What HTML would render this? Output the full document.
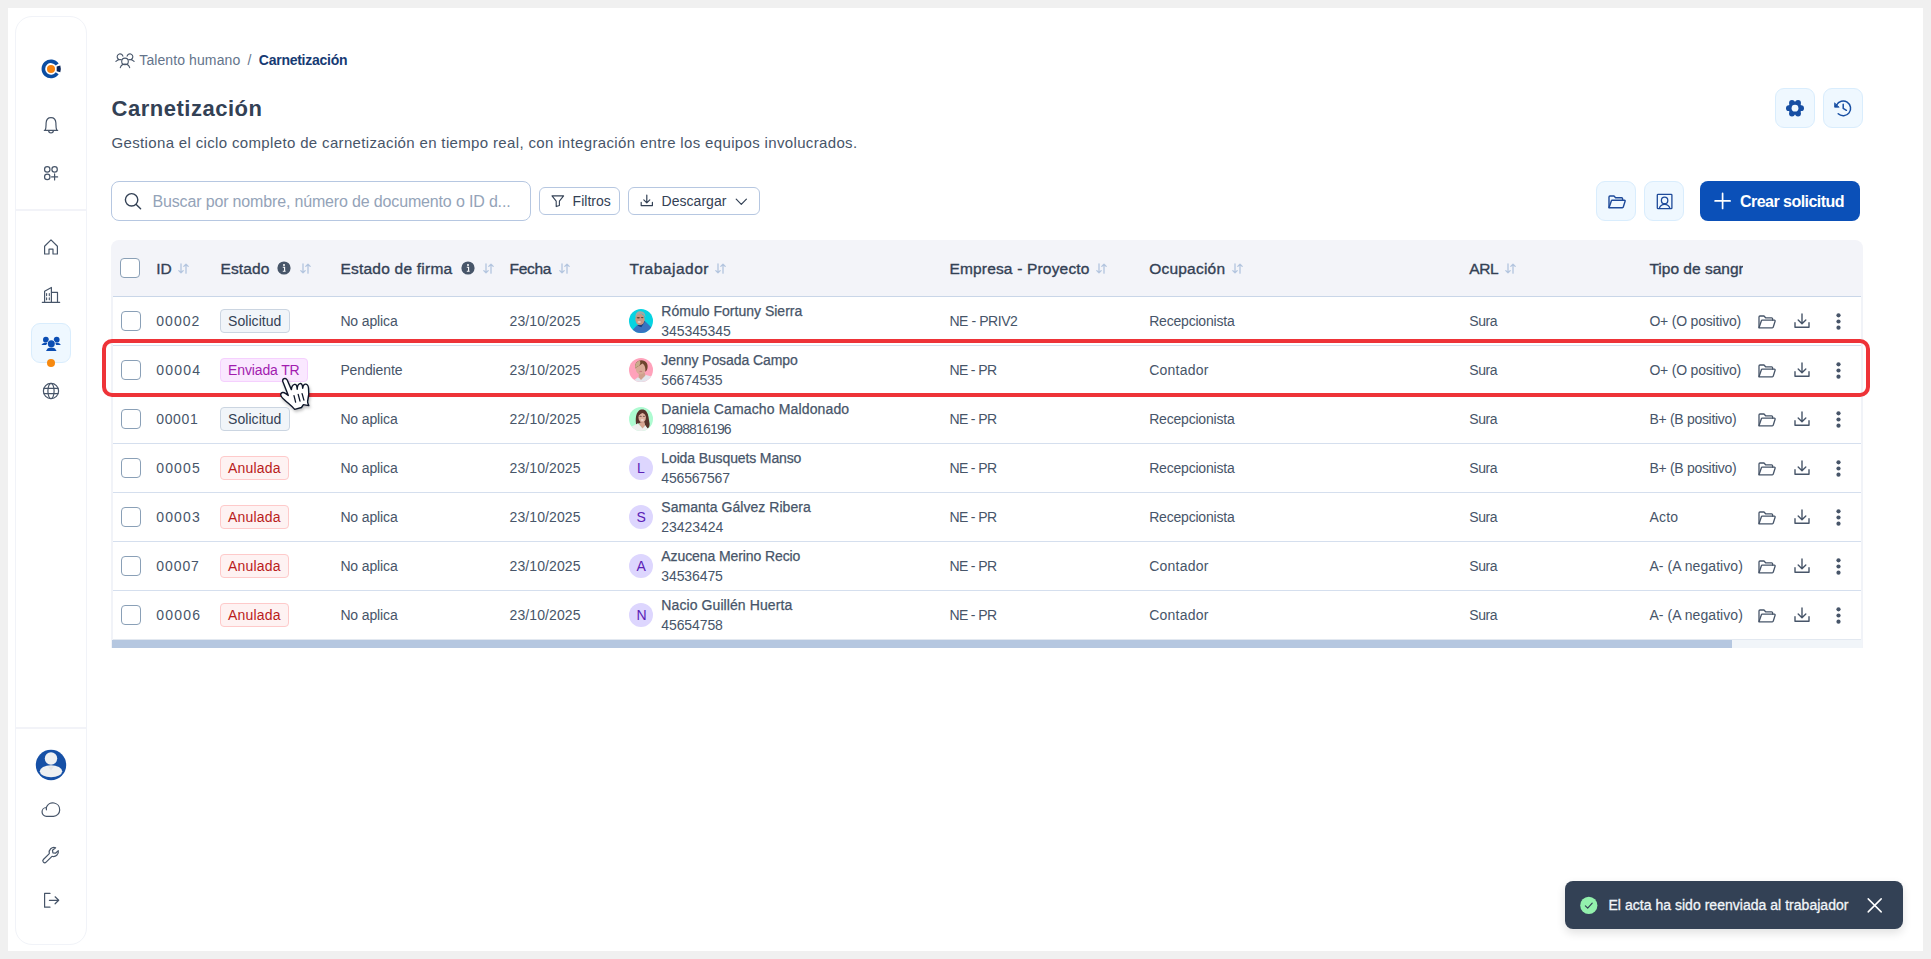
<!DOCTYPE html>
<html lang="es"><head><meta charset="utf-8"><title>Carnetización</title>
<style>
*{box-sizing:border-box;margin:0;padding:0}
html,body{width:1931px;height:959px;overflow:hidden;background:#f0f0f0;font-family:"Liberation Sans",sans-serif;}
.app{position:absolute;left:8px;top:8px;width:1915px;height:943px;background:#fff;}
.abs{position:absolute}
.t{position:absolute;white-space:nowrap;line-height:1;}
.hd{-webkit-text-stroke:.35px #334155}
.nm{-webkit-text-stroke:.25px #475569}
.ts{-webkit-text-stroke:.3px #f1f5f9}
.side{position:absolute;left:15px;top:16px;width:72px;height:929px;border:1px solid #f1f3f8;border-radius:17px;background:#fff}
.sep{position:absolute;left:16px;width:70px;height:2px;background:#f2f3f8}
svg{position:absolute;overflow:visible}
.ibtn{position:absolute;width:40px;height:40px;border-radius:9px;background:#eff8ff;border:1px solid #d9edfd}
.search{position:absolute;left:111px;top:181px;width:420px;height:40px;border:1px solid #b6c7e1;border-radius:8px;background:#fff}
.obtn{position:absolute;top:187px;height:28px;border:1px solid #b6c7e1;border-radius:6px;background:#fff}
.primary{position:absolute;left:1700px;top:181px;width:160px;height:40px;border-radius:8px;background:#0b50b8}
.thead{position:absolute;left:111px;top:240px;width:1752px;height:57px;background:#f3f4f9;border-radius:8px 8px 0 0;border-bottom:1px solid #c9d6e8}
.tbody{position:absolute;left:111px;top:296px;width:1752px;height:352px;border-left:2px solid #f1f3f8;border-right:2px solid #f1f3f8}
.rowline{position:absolute;left:113px;width:1748px;height:1px;background:#d5dfee}
.cb{position:absolute;width:20px;height:20px;border:1px solid #8aa0b7;border-radius:4px;background:#fff}
.tag{position:absolute;height:24px;border-radius:4px;border:1px solid}
.av{position:absolute;width:24px;height:24px;border-radius:50%}
.hl{position:absolute;left:102px;top:339px;width:1768px;height:58px;border:4px solid #ee3338;border-radius:10px}
.toast{position:absolute;left:1565px;top:881px;width:338px;height:48px;border-radius:8px;background:#334155;box-shadow:0 4px 10px rgba(0,0,0,.12)}
</style></head>
<body>
<div class="app"></div>
<aside class="side"></aside>
<div class="sep" style="top:209px"></div><div class="sep" style="top:727px"></div>
<nav class="sidenav"><svg style="left:40px;top:58px" width="22" height="22" viewBox="40 58 22 22" fill="none"><path d="M57.2 64.55A7.6 7.6 0 1 0 57.2 73.25" stroke="#0b4da2" stroke-width="3.6"/><circle cx="51" cy="68.9" r="4" fill="#f5820f" stroke="none"/><path d="M56.7 66.6L60.3 65.6Q61.3 68.9 60.3 72.2L56.7 71.2Z" fill="#0a2558" stroke="none"/></svg><svg style="left:42px;top:115px" width="18" height="20" viewBox="42 115 18 20" fill="none" stroke="#475569" stroke-width="1.2" stroke-linecap="round" stroke-linejoin="round"><path d="M44.3 130.3H57.7M45.2 130.3C46.3 127.5 46 125.5 46.1 123C46.3 119.8 48.3 117.6 51 117.6C53.7 117.6 55.7 119.8 55.9 123C56 125.5 55.7 127.5 56.8 130.3M48.6 130.6A2.4 2.4 0 0 0 53.4 130.6"/></svg><svg style="left:43px;top:165px" width="16" height="16" viewBox="43 165 16 16" fill="none" stroke="#475569" stroke-width="1.2" stroke-linecap="round" stroke-linejoin="round"><circle cx="47.25" cy="169.4" r="2.7"/><circle cx="54.6" cy="169.4" r="2.7"/><circle cx="47.25" cy="176.9" r="2.7"/><path d="M54.6 173.9V179.9M51.6 176.9H57.6"/></svg><svg style="left:42px;top:238px" width="18" height="18" viewBox="42 238 18 18" fill="none" stroke="#475569" stroke-width="1.2" stroke-linecap="round" stroke-linejoin="round"><path d="M44.6 246.2L51 239.9L57.4 246.2V254H53V249.2H49V254H44.6Z"/></svg><svg style="left:41px;top:286px" width="20" height="18" viewBox="41 286 20 18" fill="none" stroke="#475569" stroke-width="1.2" stroke-linecap="round" stroke-linejoin="round"><path d="M42.3 302.3H59.7M44.6 302V291.3L51.4 287.5V302M51.6 292.4H57.5V302"/><path d="M46.6 293.5V295.6M49.3 293.5V295.6M46.6 297.8V299.8M49.3 297.8V299.8" stroke-width="1.1"/></svg><div class="abs" style="left:31px;top:323px;width:40px;height:40px;border-radius:9px;background:#eff8ff;border:1px solid #d9edfd"></div><svg style="left:40px;top:335px" width="22" height="18" viewBox="40 335 22 18" fill="#0b4db3" stroke="none"><circle cx="45.9" cy="339.7" r="2.9"/><path d="M41.4 345L43 343.3Q45.9 342 47.5 343.3L46 345Z"/><circle cx="56.7" cy="339.7" r="2.9"/><path d="M60.9 345L59.3 343.3Q56.4 342 54.8 343.3L56.3 345Z"/><circle cx="51.3" cy="343.8" r="4.2" fill="#eff8ff"/><circle cx="51.3" cy="343.8" r="3.5"/><path d="M46 350.9L47.6 348.4Q51.3 346.4 55 348.4L56.6 350.9Z"/></svg><div class="abs" style="left:47px;top:359px;width:8px;height:8px;border-radius:50%;background:#f7890f"></div><svg style="left:42px;top:382px" width="18" height="18" viewBox="42 382 18 18" fill="none" stroke="#475569" stroke-width="1.2" stroke-linecap="round" stroke-linejoin="round"><circle cx="51" cy="391" r="7.6"/><ellipse cx="51" cy="391" rx="3.1" ry="7.6"/><path d="M44 388.4H58M44 393.6H58"/></svg><svg style="left:35px;top:749px" width="32" height="32" viewBox="35 749 32 32" stroke="none"><circle cx="51" cy="765" r="15.2" fill="#1650a6"/><circle cx="51" cy="758.5" r="6.2" fill="#eef0f2"/><ellipse cx="51" cy="771.3" rx="11.2" ry="6" fill="#eef0f2"/><path d="M48 766.5L51 770.5L54 766.5Z" fill="#e2e3e5"/></svg><svg style="left:41px;top:802px" width="20" height="16" viewBox="41 802 20 16" fill="none" stroke="#475569" stroke-width="1.2" stroke-linecap="round" stroke-linejoin="round"><path d="M46.6 816.3A4.4 4.4 0 0 1 46.3 807.5A6.9 6.9 0 0 1 59.7 810A6.4 6.4 0 0 1 53.5 816.3Z M46.4 807.6V809.8"/></svg><svg style="left:42px;top:846px" width="18" height="18" viewBox="42 846 18 18" fill="none" stroke="#475569" stroke-width="1.2" stroke-linecap="round" stroke-linejoin="round"><path d="M55.6 847.7A4.9 4.9 0 0 0 49.3 853.6L43.4 859.5A1.9 1.9 0 0 0 46.1 862.2L52 856.3A4.9 4.9 0 0 0 58.3 850.6L55.5 853.2L52.9 852.8L52.5 850.3Z"/></svg><svg style="left:43px;top:892px" width="18" height="17" viewBox="43 892 18 17" fill="none" stroke="#475569" stroke-width="1.2" stroke-linecap="round" stroke-linejoin="round"><path d="M50 893.4H44.6V907.2H50M49.4 900.3H58.6M55.1 896.8L58.7 900.3L55.1 903.8"/></svg></nav>
<main>
<nav>
<span class="t " style="left:139.3px;top:53.05px;font-size:14px;font-weight:400;color:#64748b;letter-spacing:0.097px;">Talento humano</span>
<span class="t " style="left:247.5px;top:53.05px;font-size:14px;font-weight:400;color:#64748b;">/</span>
<span class="t " style="left:258.8px;top:53.05px;font-size:14px;font-weight:700;color:#163a73;letter-spacing:-0.255px;">Carnetización</span>
</nav>
<h1><span class="t " style="left:111.5px;top:98.18px;font-size:22px;font-weight:700;color:#334155;letter-spacing:0.518px;">Carnetización</span></h1>
<p><span class="t " style="left:111.5px;top:134.90px;font-size:15px;font-weight:400;color:#475569;letter-spacing:0.348px;">Gestiona el ciclo completo de carnetización en tiempo real, con integración entre los equipos involucrados.</span></p>
<div class="ibtn" style="left:1775px;top:88px"></div><div class="ibtn" style="left:1823px;top:88px"></div>
<div class="search"></div>
<span class="t " style="left:152.5px;top:194.06px;font-size:16px;font-weight:400;color:#94a3b8;letter-spacing:-0.157px;">Buscar por nombre, número de documento o ID d...</span>
<div class="obtn" style="left:539px;width:81px"></div>
<span class="t " style="left:572.6px;top:194.15px;font-size:14px;font-weight:400;color:#334155;letter-spacing:0.011px;">Filtros</span>
<div class="obtn" style="left:628px;width:132px"></div>
<span class="t " style="left:661.5px;top:194.15px;font-size:14px;font-weight:400;color:#334155;letter-spacing:0.045px;">Descargar</span>
<div class="ibtn" style="left:1596px;top:181px"></div><div class="ibtn" style="left:1644px;top:181px"></div>
<div class="primary"></div>
<span class="t " style="left:1740.0px;top:194.26px;font-size:16px;font-weight:700;color:#ffffff;letter-spacing:-0.535px;">Crear solicitud</span>
<section class="table">
<div class="thead"></div>
<div class="cb" style="left:120px;top:258px"></div>
<span class="t hd" style="left:156.3px;top:261.48px;font-size:15.5px;font-weight:400;color:#334155;letter-spacing:0.000px;">ID</span>
<svg style="left:178px;top:262.5px" width="11" height="11" viewBox="0 0 11 11" fill="none" stroke="#b3c5df" stroke-width="1.3" stroke-linecap="round" stroke-linejoin="round"><path d="M3 0.8V9.8M0.8 7.6L3 9.8L5.2 7.6"/><path d="M8 10.2V1.2M5.8 3.4L8 1.2L10.2 3.4"/></svg>
<span class="t hd" style="left:220.6px;top:261.48px;font-size:15.5px;font-weight:400;color:#334155;letter-spacing:0.089px;">Estado</span>
<span class="t hd" style="left:340.4px;top:261.48px;font-size:15.5px;font-weight:400;color:#334155;letter-spacing:0.229px;">Estado de firma</span>
<span class="t hd" style="left:509.5px;top:261.48px;font-size:15.5px;font-weight:400;color:#334155;letter-spacing:-0.279px;">Fecha</span>
<svg style="left:558.5px;top:262.5px" width="11" height="11" viewBox="0 0 11 11" fill="none" stroke="#b3c5df" stroke-width="1.3" stroke-linecap="round" stroke-linejoin="round"><path d="M3 0.8V9.8M0.8 7.6L3 9.8L5.2 7.6"/><path d="M8 10.2V1.2M5.8 3.4L8 1.2L10.2 3.4"/></svg>
<span class="t hd" style="left:629.5px;top:261.48px;font-size:15.5px;font-weight:400;color:#334155;letter-spacing:0.511px;">Trabajador</span>
<svg style="left:715px;top:262.5px" width="11" height="11" viewBox="0 0 11 11" fill="none" stroke="#b3c5df" stroke-width="1.3" stroke-linecap="round" stroke-linejoin="round"><path d="M3 0.8V9.8M0.8 7.6L3 9.8L5.2 7.6"/><path d="M8 10.2V1.2M5.8 3.4L8 1.2L10.2 3.4"/></svg>
<span class="t hd" style="left:949.4px;top:261.48px;font-size:15.5px;font-weight:400;color:#334155;letter-spacing:0.180px;">Empresa - Proyecto</span>
<svg style="left:1096px;top:262.5px" width="11" height="11" viewBox="0 0 11 11" fill="none" stroke="#b3c5df" stroke-width="1.3" stroke-linecap="round" stroke-linejoin="round"><path d="M3 0.8V9.8M0.8 7.6L3 9.8L5.2 7.6"/><path d="M8 10.2V1.2M5.8 3.4L8 1.2L10.2 3.4"/></svg>
<span class="t hd" style="left:1149.2px;top:261.48px;font-size:15.5px;font-weight:400;color:#334155;letter-spacing:0.221px;">Ocupación</span>
<svg style="left:1231.5px;top:262.5px" width="11" height="11" viewBox="0 0 11 11" fill="none" stroke="#b3c5df" stroke-width="1.3" stroke-linecap="round" stroke-linejoin="round"><path d="M3 0.8V9.8M0.8 7.6L3 9.8L5.2 7.6"/><path d="M8 10.2V1.2M5.8 3.4L8 1.2L10.2 3.4"/></svg>
<span class="t hd" style="left:1469.3px;top:261.48px;font-size:15.5px;font-weight:400;color:#334155;letter-spacing:-0.385px;">ARL</span>
<svg style="left:1504.5px;top:262.5px" width="11" height="11" viewBox="0 0 11 11" fill="none" stroke="#b3c5df" stroke-width="1.3" stroke-linecap="round" stroke-linejoin="round"><path d="M3 0.8V9.8M0.8 7.6L3 9.8L5.2 7.6"/><path d="M8 10.2V1.2M5.8 3.4L8 1.2L10.2 3.4"/></svg>
<svg style="left:277px;top:261px" width="14" height="14" viewBox="0 0 14 14"><circle cx="7" cy="7" r="6.6" fill="#475569"/><circle cx="7" cy="4" r="1" fill="#fff"/><path d="M5.8 6.2H7.6V10.2M5.8 10.3H8.6" stroke="#fff" stroke-width="1.1" fill="none"/></svg>
<svg style="left:299.5px;top:262.5px" width="11" height="11" viewBox="0 0 11 11" fill="none" stroke="#b3c5df" stroke-width="1.3" stroke-linecap="round" stroke-linejoin="round"><path d="M3 0.8V9.8M0.8 7.6L3 9.8L5.2 7.6"/><path d="M8 10.2V1.2M5.8 3.4L8 1.2L10.2 3.4"/></svg>
<svg style="left:460.5px;top:261px" width="14" height="14" viewBox="0 0 14 14"><circle cx="7" cy="7" r="6.6" fill="#475569"/><circle cx="7" cy="4" r="1" fill="#fff"/><path d="M5.8 6.2H7.6V10.2M5.8 10.3H8.6" stroke="#fff" stroke-width="1.1" fill="none"/></svg>
<svg style="left:483px;top:262.5px" width="11" height="11" viewBox="0 0 11 11" fill="none" stroke="#b3c5df" stroke-width="1.3" stroke-linecap="round" stroke-linejoin="round"><path d="M3 0.8V9.8M0.8 7.6L3 9.8L5.2 7.6"/><path d="M8 10.2V1.2M5.8 3.4L8 1.2L10.2 3.4"/></svg>
<div class="abs" style="left:1649px;top:250px;width:94px;height:36px;overflow:hidden"><span class="t hd" style="left:0.4px;top:11.48px;font-size:15.5px;font-weight:400;color:#334155;letter-spacing:0.012px;">Tipo de sangre</span></div>
<div class="tbody"></div>
<div class="row">
<div class="cb" style="left:121px;top:311px"></div>
<span class="t " style="left:156.3px;top:313.65px;font-size:14px;font-weight:400;color:#475569;letter-spacing:1.012px;">00002</span>
<div class="tag" style="left:220px;top:309px;width:70px;background:#f1f5f9;border-color:#cbd5e1"></div>
<span class="t " style="left:228.1px;top:313.65px;font-size:14px;font-weight:400;color:#334155;letter-spacing:0.042px;">Solicitud</span>
<span class="t " style="left:340.4px;top:313.65px;font-size:14px;font-weight:400;color:#475569;letter-spacing:-0.131px;">No aplica</span>
<span class="t " style="left:509.5px;top:313.65px;font-size:14px;font-weight:400;color:#475569;letter-spacing:0.102px;">23/10/2025</span>
<svg style="left:629px;top:309px" width="24" height="24" viewBox="0 0 24 24"><defs><clipPath id="cimg1"><circle cx="12" cy="12" r="12"/></clipPath><filter id="abimg1" x="-10%" y="-10%" width="120%" height="120%"><feGaussianBlur stdDeviation="0.45"/></filter></defs><g clip-path="url(#cimg1)"><rect width="24" height="24" fill="#06d3e1"/><g filter="url(#abimg1)"><path d="M3.5 21L8 16.2L12 17L16.2 12.2L23 19V25H3Z" fill="#3873c0"/><path d="M8.2 16.4L12.3 18.2L16 12.4L14.8 11.5L11 15Z" fill="#1c3a7a"/><ellipse cx="11" cy="10.3" rx="4.7" ry="5.8" fill="#c79682"/><path d="M6.4 8.4C6.2 3.8 9 2 11.6 2.2C14.8 2.3 16.6 4.6 16.4 8.6C15.6 6.6 14.6 5.4 13.6 5C11 4.4 8 5 6.4 8.4Z" fill="#aaa6a2"/><ellipse cx="9.3" cy="8.7" rx="1.6" ry=".7" fill="#5d4338"/><ellipse cx="13.2" cy="8.6" rx="1.3" ry=".6" fill="#5d4338"/><ellipse cx="10.2" cy="13" rx="1.8" ry=".8" fill="#f1ded6"/></g></g></svg>
<span class="t nm" style="left:661.3px;top:303.95px;font-size:14px;font-weight:400;color:#475569;letter-spacing:0.008px;">Rómulo Fortuny Sierra</span>
<span class="t " style="left:661.3px;top:323.85px;font-size:14px;font-weight:400;color:#475569;letter-spacing:-0.075px;">345345345</span>
<span class="t " style="left:949.4px;top:313.65px;font-size:14px;font-weight:400;color:#475569;letter-spacing:-0.426px;">NE - PRIV2</span>
<span class="t " style="left:1149.2px;top:313.65px;font-size:14px;font-weight:400;color:#475569;letter-spacing:-0.203px;">Recepcionista</span>
<span class="t " style="left:1469.3px;top:313.65px;font-size:14px;font-weight:400;color:#475569;letter-spacing:-0.470px;">Sura</span>
<span class="t " style="left:1649.4px;top:313.65px;font-size:14px;font-weight:400;color:#475569;letter-spacing:-0.195px;">O+ (O positivo)</span>
<svg style="left:1757.5px;top:314.5px" width="18" height="14" viewBox="0 0 18 14" fill="none" stroke="#475569" stroke-width="1.3" stroke-linejoin="round" stroke-linecap="round"><path d="M1 12.5V2C1 1.4 1.4 1 2 1H6L7.6 2.8H13.6C14.2 2.8 14.6 3.2 14.6 3.8V5.2"/><path d="M1 12.8L3.4 5.8C3.5 5.4 3.8 5.2 4.2 5.2H16.4C17 5.2 17.3 5.7 17.1 6.2L15.2 12.2C15.1 12.6 14.8 12.8 14.4 12.8Z"/></svg>
<svg style="left:1794px;top:312.5px" width="16" height="16" viewBox="0 0 16 16" fill="none" stroke="#475569" stroke-width="1.4" stroke-linejoin="round" stroke-linecap="round"><path d="M8 1V10.6M4.2 7L8 10.8L11.8 7"/><path d="M1 9.8V14.2H15V9.8"/></svg>
<svg style="left:1835.6px;top:312.5px" width="5" height="17" viewBox="0 0 5 17" fill="#475569"><circle cx="2.5" cy="2.3" r="2.1"/><circle cx="2.5" cy="8.5" r="2.1"/><circle cx="2.5" cy="14.7" r="2.1"/></svg>
</div>
<div class="row">
<div class="rowline" style="top:345px"></div>
<div class="cb" style="left:121px;top:360px"></div>
<span class="t " style="left:156.3px;top:362.65px;font-size:14px;font-weight:400;color:#475569;letter-spacing:1.212px;">00004</span>
<div class="tag" style="left:220px;top:358px;width:88px;background:#fae8ff;border-color:#f5d0fe"></div>
<span class="t " style="left:228.1px;top:362.65px;font-size:14px;font-weight:400;color:#a21caf;letter-spacing:-0.141px;">Enviada TR</span>
<span class="t " style="left:340.4px;top:362.65px;font-size:14px;font-weight:400;color:#475569;letter-spacing:-0.118px;">Pendiente</span>
<span class="t " style="left:509.5px;top:362.65px;font-size:14px;font-weight:400;color:#475569;letter-spacing:0.102px;">23/10/2025</span>
<svg style="left:629px;top:358px" width="24" height="24" viewBox="0 0 24 24"><defs><clipPath id="cimg2"><circle cx="12" cy="12" r="12"/></clipPath><filter id="abimg2" x="-10%" y="-10%" width="120%" height="120%"><feGaussianBlur stdDeviation="0.45"/></filter></defs><g clip-path="url(#cimg2)"><rect width="24" height="24" fill="#ffa2bb"/><g filter="url(#abimg2)"><path d="M4.5 22.5L10 18.6L16 16.8L22.5 18.5V25H4Z" fill="#e3e5ec"/><path d="M10 15L15.8 14.5L16.4 17.4L12 22L9.6 19.2Z" fill="#cfa08c"/><ellipse cx="11.6" cy="10.6" rx="4.9" ry="5.9" fill="#d9aa97"/><path d="M6.2 10.6C5.4 5 8.6 2.2 12.4 2.2C17 2.2 19.6 6 18.4 10.6C17.8 13 16.8 13.8 16.2 13.6C16.8 10.4 16 7.4 13.6 5.6C11 7.8 8.2 8.2 6.2 10.6Z" fill="#6d452d"/><path d="M6.2 10.4C5.6 6 7.8 3.4 10.6 2.6C11.6 3.8 11.6 5.6 10.4 7.4C8.8 8.4 7.2 8.8 6.2 10.4Z" fill="#c9ac8c"/><ellipse cx="11.8" cy="13.4" rx="1.5" ry=".7" fill="#c77f80"/></g></g></svg>
<span class="t nm" style="left:661.3px;top:352.95px;font-size:14px;font-weight:400;color:#475569;letter-spacing:-0.070px;">Jenny Posada Campo</span>
<span class="t " style="left:661.3px;top:372.85px;font-size:14px;font-weight:400;color:#475569;letter-spacing:-0.162px;">56674535</span>
<span class="t " style="left:949.4px;top:362.65px;font-size:14px;font-weight:400;color:#475569;letter-spacing:-0.621px;">NE - PR</span>
<span class="t " style="left:1149.2px;top:362.65px;font-size:14px;font-weight:400;color:#475569;letter-spacing:0.238px;">Contador</span>
<span class="t " style="left:1469.3px;top:362.65px;font-size:14px;font-weight:400;color:#475569;letter-spacing:-0.470px;">Sura</span>
<span class="t " style="left:1649.4px;top:362.65px;font-size:14px;font-weight:400;color:#475569;letter-spacing:-0.195px;">O+ (O positivo)</span>
<svg style="left:1757.5px;top:363.5px" width="18" height="14" viewBox="0 0 18 14" fill="none" stroke="#475569" stroke-width="1.3" stroke-linejoin="round" stroke-linecap="round"><path d="M1 12.5V2C1 1.4 1.4 1 2 1H6L7.6 2.8H13.6C14.2 2.8 14.6 3.2 14.6 3.8V5.2"/><path d="M1 12.8L3.4 5.8C3.5 5.4 3.8 5.2 4.2 5.2H16.4C17 5.2 17.3 5.7 17.1 6.2L15.2 12.2C15.1 12.6 14.8 12.8 14.4 12.8Z"/></svg>
<svg style="left:1794px;top:361.5px" width="16" height="16" viewBox="0 0 16 16" fill="none" stroke="#475569" stroke-width="1.4" stroke-linejoin="round" stroke-linecap="round"><path d="M8 1V10.6M4.2 7L8 10.8L11.8 7"/><path d="M1 9.8V14.2H15V9.8"/></svg>
<svg style="left:1835.6px;top:361.5px" width="5" height="17" viewBox="0 0 5 17" fill="#475569"><circle cx="2.5" cy="2.3" r="2.1"/><circle cx="2.5" cy="8.5" r="2.1"/><circle cx="2.5" cy="14.7" r="2.1"/></svg>
</div>
<div class="row">
<div class="rowline" style="top:394px"></div>
<div class="cb" style="left:121px;top:409px"></div>
<span class="t " style="left:156.3px;top:411.65px;font-size:14px;font-weight:400;color:#475569;letter-spacing:0.613px;">00001</span>
<div class="tag" style="left:220px;top:407px;width:70px;background:#f1f5f9;border-color:#cbd5e1"></div>
<span class="t " style="left:228.1px;top:411.65px;font-size:14px;font-weight:400;color:#334155;letter-spacing:0.042px;">Solicitud</span>
<span class="t " style="left:340.4px;top:411.65px;font-size:14px;font-weight:400;color:#475569;letter-spacing:-0.131px;">No aplica</span>
<span class="t " style="left:509.5px;top:411.65px;font-size:14px;font-weight:400;color:#475569;letter-spacing:0.142px;">22/10/2025</span>
<svg style="left:629px;top:407px" width="24" height="24" viewBox="0 0 24 24"><defs><clipPath id="cimg3"><circle cx="12" cy="12" r="12"/></clipPath><filter id="abimg3" x="-10%" y="-10%" width="120%" height="120%"><feGaussianBlur stdDeviation="0.45"/></filter></defs><g clip-path="url(#cimg3)"><rect width="24" height="24" fill="#aefbd1"/><g filter="url(#abimg3)"><path d="M7.2 18C6.4 12 6.6 7 9.6 4C11.6 2 15.4 2 17.4 4.4C19.8 7.6 19.6 12 20.6 16.6C21 19.2 19.6 21.4 18 21.6L15 16L8.6 16.6Z" fill="#56302b"/><path d="M2 20L8.6 16.4L13.4 21L16.4 18.6L19 22V25H2Z" fill="#efefef"/><path d="M11 15.5L15.4 15L16.2 18.6L13.6 21.6L10.2 17.4Z" fill="#d7a592"/><ellipse cx="13.2" cy="10.4" rx="3.7" ry="5.2" fill="#ddb09f"/><path d="M9.4 9.4C9.4 5.6 11.4 4 13.4 4.2C15.6 4.2 17.2 6 17 9.2C16 7.4 14.8 6.4 13.6 6C12 6.6 10.2 7.6 9.4 9.4Z" fill="#5a322c"/><ellipse cx="11.6" cy="9.2" rx="1.2" ry=".55" fill="#6b4a44"/><ellipse cx="14.9" cy="9.2" rx="1.1" ry=".55" fill="#6b4a44"/><ellipse cx="13.3" cy="13" rx="1.6" ry=".8" fill="#f4e4e0"/></g></g></svg>
<span class="t nm" style="left:661.3px;top:401.95px;font-size:14px;font-weight:400;color:#475569;letter-spacing:0.142px;">Daniela Camacho Maldonado</span>
<span class="t " style="left:661.3px;top:421.85px;font-size:14px;font-weight:400;color:#475569;letter-spacing:-0.838px;">1098816196</span>
<span class="t " style="left:949.4px;top:411.65px;font-size:14px;font-weight:400;color:#475569;letter-spacing:-0.621px;">NE - PR</span>
<span class="t " style="left:1149.2px;top:411.65px;font-size:14px;font-weight:400;color:#475569;letter-spacing:-0.203px;">Recepcionista</span>
<span class="t " style="left:1469.3px;top:411.65px;font-size:14px;font-weight:400;color:#475569;letter-spacing:-0.470px;">Sura</span>
<span class="t " style="left:1649.4px;top:411.65px;font-size:14px;font-weight:400;color:#475569;letter-spacing:-0.296px;">B+ (B positivo)</span>
<svg style="left:1757.5px;top:412.5px" width="18" height="14" viewBox="0 0 18 14" fill="none" stroke="#475569" stroke-width="1.3" stroke-linejoin="round" stroke-linecap="round"><path d="M1 12.5V2C1 1.4 1.4 1 2 1H6L7.6 2.8H13.6C14.2 2.8 14.6 3.2 14.6 3.8V5.2"/><path d="M1 12.8L3.4 5.8C3.5 5.4 3.8 5.2 4.2 5.2H16.4C17 5.2 17.3 5.7 17.1 6.2L15.2 12.2C15.1 12.6 14.8 12.8 14.4 12.8Z"/></svg>
<svg style="left:1794px;top:410.5px" width="16" height="16" viewBox="0 0 16 16" fill="none" stroke="#475569" stroke-width="1.4" stroke-linejoin="round" stroke-linecap="round"><path d="M8 1V10.6M4.2 7L8 10.8L11.8 7"/><path d="M1 9.8V14.2H15V9.8"/></svg>
<svg style="left:1835.6px;top:410.5px" width="5" height="17" viewBox="0 0 5 17" fill="#475569"><circle cx="2.5" cy="2.3" r="2.1"/><circle cx="2.5" cy="8.5" r="2.1"/><circle cx="2.5" cy="14.7" r="2.1"/></svg>
</div>
<div class="row">
<div class="rowline" style="top:443px"></div>
<div class="cb" style="left:121px;top:458px"></div>
<span class="t " style="left:156.3px;top:460.65px;font-size:14px;font-weight:400;color:#475569;letter-spacing:1.113px;">00005</span>
<div class="tag" style="left:220px;top:456px;width:69px;background:#fef2f2;border-color:#fecaca"></div>
<span class="t " style="left:228.1px;top:460.65px;font-size:14px;font-weight:400;color:#b91c1c;letter-spacing:0.158px;">Anulada</span>
<span class="t " style="left:340.4px;top:460.65px;font-size:14px;font-weight:400;color:#475569;letter-spacing:-0.131px;">No aplica</span>
<span class="t " style="left:509.5px;top:460.65px;font-size:14px;font-weight:400;color:#475569;letter-spacing:0.102px;">23/10/2025</span>
<div class="av" style="left:629px;top:456px;background:#ddd6fe"></div>
<span class="t " style="left:636.5px;top:460.65px;font-size:14px;font-weight:400;color:#5b21b6;width:9px;text-align:center;">L</span>
<span class="t nm" style="left:661.3px;top:450.95px;font-size:14px;font-weight:400;color:#475569;letter-spacing:-0.122px;">Loida Busquets Manso</span>
<span class="t " style="left:661.3px;top:470.85px;font-size:14px;font-weight:400;color:#475569;letter-spacing:-0.175px;">456567567</span>
<span class="t " style="left:949.4px;top:460.65px;font-size:14px;font-weight:400;color:#475569;letter-spacing:-0.621px;">NE - PR</span>
<span class="t " style="left:1149.2px;top:460.65px;font-size:14px;font-weight:400;color:#475569;letter-spacing:-0.203px;">Recepcionista</span>
<span class="t " style="left:1469.3px;top:460.65px;font-size:14px;font-weight:400;color:#475569;letter-spacing:-0.470px;">Sura</span>
<span class="t " style="left:1649.4px;top:460.65px;font-size:14px;font-weight:400;color:#475569;letter-spacing:-0.296px;">B+ (B positivo)</span>
<svg style="left:1757.5px;top:461.5px" width="18" height="14" viewBox="0 0 18 14" fill="none" stroke="#475569" stroke-width="1.3" stroke-linejoin="round" stroke-linecap="round"><path d="M1 12.5V2C1 1.4 1.4 1 2 1H6L7.6 2.8H13.6C14.2 2.8 14.6 3.2 14.6 3.8V5.2"/><path d="M1 12.8L3.4 5.8C3.5 5.4 3.8 5.2 4.2 5.2H16.4C17 5.2 17.3 5.7 17.1 6.2L15.2 12.2C15.1 12.6 14.8 12.8 14.4 12.8Z"/></svg>
<svg style="left:1794px;top:459.5px" width="16" height="16" viewBox="0 0 16 16" fill="none" stroke="#475569" stroke-width="1.4" stroke-linejoin="round" stroke-linecap="round"><path d="M8 1V10.6M4.2 7L8 10.8L11.8 7"/><path d="M1 9.8V14.2H15V9.8"/></svg>
<svg style="left:1835.6px;top:459.5px" width="5" height="17" viewBox="0 0 5 17" fill="#475569"><circle cx="2.5" cy="2.3" r="2.1"/><circle cx="2.5" cy="8.5" r="2.1"/><circle cx="2.5" cy="14.7" r="2.1"/></svg>
</div>
<div class="row">
<div class="rowline" style="top:492px"></div>
<div class="cb" style="left:121px;top:507px"></div>
<span class="t " style="left:156.3px;top:509.65px;font-size:14px;font-weight:400;color:#475569;letter-spacing:1.113px;">00003</span>
<div class="tag" style="left:220px;top:505px;width:69px;background:#fef2f2;border-color:#fecaca"></div>
<span class="t " style="left:228.1px;top:509.65px;font-size:14px;font-weight:400;color:#b91c1c;letter-spacing:0.158px;">Anulada</span>
<span class="t " style="left:340.4px;top:509.65px;font-size:14px;font-weight:400;color:#475569;letter-spacing:-0.131px;">No aplica</span>
<span class="t " style="left:509.5px;top:509.65px;font-size:14px;font-weight:400;color:#475569;letter-spacing:0.102px;">23/10/2025</span>
<div class="av" style="left:629px;top:505px;background:#ddd6fe"></div>
<span class="t " style="left:636.5px;top:509.65px;font-size:14px;font-weight:400;color:#5b21b6;width:9px;text-align:center;">S</span>
<span class="t nm" style="left:661.3px;top:499.95px;font-size:14px;font-weight:400;color:#475569;letter-spacing:0.041px;">Samanta Gálvez Ribera</span>
<span class="t " style="left:661.3px;top:519.85px;font-size:14px;font-weight:400;color:#475569;letter-spacing:-0.037px;">23423424</span>
<span class="t " style="left:949.4px;top:509.65px;font-size:14px;font-weight:400;color:#475569;letter-spacing:-0.621px;">NE - PR</span>
<span class="t " style="left:1149.2px;top:509.65px;font-size:14px;font-weight:400;color:#475569;letter-spacing:-0.203px;">Recepcionista</span>
<span class="t " style="left:1469.3px;top:509.65px;font-size:14px;font-weight:400;color:#475569;letter-spacing:-0.470px;">Sura</span>
<span class="t " style="left:1649.4px;top:509.65px;font-size:14px;font-weight:400;color:#475569;letter-spacing:0.246px;">Acto</span>
<svg style="left:1757.5px;top:510.5px" width="18" height="14" viewBox="0 0 18 14" fill="none" stroke="#475569" stroke-width="1.3" stroke-linejoin="round" stroke-linecap="round"><path d="M1 12.5V2C1 1.4 1.4 1 2 1H6L7.6 2.8H13.6C14.2 2.8 14.6 3.2 14.6 3.8V5.2"/><path d="M1 12.8L3.4 5.8C3.5 5.4 3.8 5.2 4.2 5.2H16.4C17 5.2 17.3 5.7 17.1 6.2L15.2 12.2C15.1 12.6 14.8 12.8 14.4 12.8Z"/></svg>
<svg style="left:1794px;top:508.5px" width="16" height="16" viewBox="0 0 16 16" fill="none" stroke="#475569" stroke-width="1.4" stroke-linejoin="round" stroke-linecap="round"><path d="M8 1V10.6M4.2 7L8 10.8L11.8 7"/><path d="M1 9.8V14.2H15V9.8"/></svg>
<svg style="left:1835.6px;top:508.5px" width="5" height="17" viewBox="0 0 5 17" fill="#475569"><circle cx="2.5" cy="2.3" r="2.1"/><circle cx="2.5" cy="8.5" r="2.1"/><circle cx="2.5" cy="14.7" r="2.1"/></svg>
</div>
<div class="row">
<div class="rowline" style="top:541px"></div>
<div class="cb" style="left:121px;top:556px"></div>
<span class="t " style="left:156.3px;top:558.65px;font-size:14px;font-weight:400;color:#475569;letter-spacing:0.912px;">00007</span>
<div class="tag" style="left:220px;top:554px;width:69px;background:#fef2f2;border-color:#fecaca"></div>
<span class="t " style="left:228.1px;top:558.65px;font-size:14px;font-weight:400;color:#b91c1c;letter-spacing:0.158px;">Anulada</span>
<span class="t " style="left:340.4px;top:558.65px;font-size:14px;font-weight:400;color:#475569;letter-spacing:-0.131px;">No aplica</span>
<span class="t " style="left:509.5px;top:558.65px;font-size:14px;font-weight:400;color:#475569;letter-spacing:0.102px;">23/10/2025</span>
<div class="av" style="left:629px;top:554px;background:#ddd6fe"></div>
<span class="t " style="left:636.5px;top:558.65px;font-size:14px;font-weight:400;color:#5b21b6;width:9px;text-align:center;">A</span>
<span class="t nm" style="left:661.3px;top:548.95px;font-size:14px;font-weight:400;color:#475569;letter-spacing:-0.093px;">Azucena Merino Recio</span>
<span class="t " style="left:661.3px;top:568.85px;font-size:14px;font-weight:400;color:#475569;letter-spacing:-0.100px;">34536475</span>
<span class="t " style="left:949.4px;top:558.65px;font-size:14px;font-weight:400;color:#475569;letter-spacing:-0.621px;">NE - PR</span>
<span class="t " style="left:1149.2px;top:558.65px;font-size:14px;font-weight:400;color:#475569;letter-spacing:0.238px;">Contador</span>
<span class="t " style="left:1469.3px;top:558.65px;font-size:14px;font-weight:400;color:#475569;letter-spacing:-0.470px;">Sura</span>
<span class="t " style="left:1649.4px;top:558.65px;font-size:14px;font-weight:400;color:#475569;letter-spacing:0.059px;">A- (A negativo)</span>
<svg style="left:1757.5px;top:559.5px" width="18" height="14" viewBox="0 0 18 14" fill="none" stroke="#475569" stroke-width="1.3" stroke-linejoin="round" stroke-linecap="round"><path d="M1 12.5V2C1 1.4 1.4 1 2 1H6L7.6 2.8H13.6C14.2 2.8 14.6 3.2 14.6 3.8V5.2"/><path d="M1 12.8L3.4 5.8C3.5 5.4 3.8 5.2 4.2 5.2H16.4C17 5.2 17.3 5.7 17.1 6.2L15.2 12.2C15.1 12.6 14.8 12.8 14.4 12.8Z"/></svg>
<svg style="left:1794px;top:557.5px" width="16" height="16" viewBox="0 0 16 16" fill="none" stroke="#475569" stroke-width="1.4" stroke-linejoin="round" stroke-linecap="round"><path d="M8 1V10.6M4.2 7L8 10.8L11.8 7"/><path d="M1 9.8V14.2H15V9.8"/></svg>
<svg style="left:1835.6px;top:557.5px" width="5" height="17" viewBox="0 0 5 17" fill="#475569"><circle cx="2.5" cy="2.3" r="2.1"/><circle cx="2.5" cy="8.5" r="2.1"/><circle cx="2.5" cy="14.7" r="2.1"/></svg>
</div>
<div class="row">
<div class="rowline" style="top:590px"></div>
<div class="cb" style="left:121px;top:605px"></div>
<span class="t " style="left:156.3px;top:607.65px;font-size:14px;font-weight:400;color:#475569;letter-spacing:1.212px;">00006</span>
<div class="tag" style="left:220px;top:603px;width:69px;background:#fef2f2;border-color:#fecaca"></div>
<span class="t " style="left:228.1px;top:607.65px;font-size:14px;font-weight:400;color:#b91c1c;letter-spacing:0.158px;">Anulada</span>
<span class="t " style="left:340.4px;top:607.65px;font-size:14px;font-weight:400;color:#475569;letter-spacing:-0.131px;">No aplica</span>
<span class="t " style="left:509.5px;top:607.65px;font-size:14px;font-weight:400;color:#475569;letter-spacing:0.102px;">23/10/2025</span>
<div class="av" style="left:629px;top:603px;background:#ddd6fe"></div>
<span class="t " style="left:636.5px;top:607.65px;font-size:14px;font-weight:400;color:#5b21b6;width:9px;text-align:center;">N</span>
<span class="t nm" style="left:661.3px;top:597.95px;font-size:14px;font-weight:400;color:#475569;letter-spacing:0.091px;">Nacio Guillén Huerta</span>
<span class="t " style="left:661.3px;top:617.85px;font-size:14px;font-weight:400;color:#475569;letter-spacing:-0.100px;">45654758</span>
<span class="t " style="left:949.4px;top:607.65px;font-size:14px;font-weight:400;color:#475569;letter-spacing:-0.621px;">NE - PR</span>
<span class="t " style="left:1149.2px;top:607.65px;font-size:14px;font-weight:400;color:#475569;letter-spacing:0.238px;">Contador</span>
<span class="t " style="left:1469.3px;top:607.65px;font-size:14px;font-weight:400;color:#475569;letter-spacing:-0.470px;">Sura</span>
<span class="t " style="left:1649.4px;top:607.65px;font-size:14px;font-weight:400;color:#475569;letter-spacing:0.059px;">A- (A negativo)</span>
<svg style="left:1757.5px;top:608.5px" width="18" height="14" viewBox="0 0 18 14" fill="none" stroke="#475569" stroke-width="1.3" stroke-linejoin="round" stroke-linecap="round"><path d="M1 12.5V2C1 1.4 1.4 1 2 1H6L7.6 2.8H13.6C14.2 2.8 14.6 3.2 14.6 3.8V5.2"/><path d="M1 12.8L3.4 5.8C3.5 5.4 3.8 5.2 4.2 5.2H16.4C17 5.2 17.3 5.7 17.1 6.2L15.2 12.2C15.1 12.6 14.8 12.8 14.4 12.8Z"/></svg>
<svg style="left:1794px;top:606.5px" width="16" height="16" viewBox="0 0 16 16" fill="none" stroke="#475569" stroke-width="1.4" stroke-linejoin="round" stroke-linecap="round"><path d="M8 1V10.6M4.2 7L8 10.8L11.8 7"/><path d="M1 9.8V14.2H15V9.8"/></svg>
<svg style="left:1835.6px;top:606.5px" width="5" height="17" viewBox="0 0 5 17" fill="#475569"><circle cx="2.5" cy="2.3" r="2.1"/><circle cx="2.5" cy="8.5" r="2.1"/><circle cx="2.5" cy="14.7" r="2.1"/></svg>
</div>
<div class="rowline" style="top:639px;background:#e2e8f0"></div>
<div class="abs" style="left:112px;top:640px;width:1750px;height:8px;background:#f1f5f9"></div>
<div class="abs" style="left:112px;top:640px;width:1620px;height:8px;background:#b5c7e0"></div>
</section>
<div class="hl"></div>
<div class="toast"></div>
<span class="t ts" style="left:1608.5px;top:898.15px;font-size:14px;font-weight:400;color:#f1f5f9;letter-spacing:0.027px;">El acta ha sido reenviada al trabajador</span>
</main>
<svg style="left:114px;top:52px" width="22" height="18" viewBox="114 52 22 18" fill="none" stroke="#475569" stroke-width="1.1" stroke-linecap="round" stroke-linejoin="round"><circle cx="125" cy="61.4" r="3.3"/><path d="M120.3 67.6A4.9 4.9 0 0 1 129.7 67.6"/><path d="M121.2 59.5A2.9 2.9 0 1 1 122.9 56.2M115.9 61.4Q117.7 59.6 120.3 59.5"/><path d="M128.8 59.5A2.9 2.9 0 1 0 127.1 56.2M134.1 61.4Q132.3 59.6 129.7 59.5"/></svg>
<svg style="left:1785px;top:98px" width="20" height="20" viewBox="1785 98 20 20" fill="#164ea3" stroke="none"><circle cx="1795" cy="108.2" r="6.6"/><circle cx="1801.10" cy="108.20" r="2.9"/><circle cx="1798.05" cy="113.48" r="2.9"/><circle cx="1791.95" cy="113.48" r="2.9"/><circle cx="1788.90" cy="108.20" r="2.9"/><circle cx="1791.95" cy="102.92" r="2.9"/><circle cx="1798.05" cy="102.92" r="2.9"/><circle cx="1795" cy="108.2" r="3.4" fill="#eff8ff"/></svg>
<svg style="left:1832px;top:98px" width="22" height="22" viewBox="1832 98 22 22" fill="none" stroke="#164ea3" stroke-width="1.5" stroke-linecap="round" stroke-linejoin="round"><path d="M1836.6 105A7.4 7.4 0 1 1 1838.2 113.8" /><path d="M1834.6 103.2V107.2H1838.8Z" fill="#164ea3" stroke-width="0.8"/><path d="M1843.2 104.2V108.4L1846.4 110.3"/></svg>
<svg style="left:124px;top:192px" width="18" height="18" viewBox="124 192 18 18" fill="none" stroke="#334155" stroke-width="1.4" stroke-linecap="round"><circle cx="131.6" cy="199.8" r="6.2"/><path d="M136.2 204.4L140.6 208.8"/></svg>
<svg style="left:551px;top:195px" width="14" height="13" viewBox="551 195 14 13" fill="none" stroke="#334155" stroke-width="1.1" stroke-linejoin="round"><path d="M552 195.9H563.6L559.4 201.2V205.4L556.2 206.6V201.2Z"/></svg>
<svg style="left:640px;top:194px" width="14" height="13" viewBox="640 194 14 13" fill="none" stroke="#334155" stroke-width="1.2" stroke-linecap="round" stroke-linejoin="round"><path d="M646.8 195V202.6M643.8 199.8L646.8 202.8L649.8 199.8M641.2 202.4V205.6H652.4V202.4"/></svg>
<svg style="left:735px;top:198px" width="13" height="8" viewBox="735 198 13 8" fill="none" stroke="#334155" stroke-width="1.2" stroke-linecap="round" stroke-linejoin="round"><path d="M736.2 199.2L741.3 204.3L746.4 199.2"/></svg>
<svg style="left:1608px;top:194.5px" width="18" height="14" viewBox="0 0 18 14" fill="none" stroke="#1e4a9a" stroke-width="1.4" stroke-linejoin="round" stroke-linecap="round"><path d="M1 12.5V2C1 1.4 1.4 1 2 1H6L7.6 2.8H13.6C14.2 2.8 14.6 3.2 14.6 3.8V5.2"/><path d="M1 12.8L3.4 5.8C3.5 5.4 3.8 5.2 4.2 5.2H16.4C17 5.2 17.3 5.7 17.1 6.2L15.2 12.2C15.1 12.6 14.8 12.8 14.4 12.8Z"/></svg>
<svg style="left:1656px;top:193px" width="17" height="17" viewBox="1656 193 17 17" fill="none" stroke="#1e4a9a" stroke-width="1.3" stroke-linejoin="round"><rect x="1657.3" y="194.3" width="14.6" height="14.4" rx="0.8"/><circle cx="1664.6" cy="200.4" r="3.2"/><path d="M1659.3 208.4A5.5 5.5 0 0 1 1669.9 208.4"/></svg>
<svg style="left:1714px;top:192px" width="18" height="18" viewBox="1714 192 18 18" fill="none" stroke="#fff" stroke-width="1.7" stroke-linecap="round"><path d="M1722.6 193.4V208.4M1715.1 200.9H1730.1"/></svg>
<svg style="left:1580px;top:896px" width="18" height="18" viewBox="1580 896 18 18" stroke="none"><circle cx="1588.8" cy="905.4" r="8.6" fill="#93f0ad"/><path d="M1585.4 905.8L1587.7 908.1L1592.2 903.2" fill="none" stroke="#334155" stroke-width="1.2" stroke-linecap="round" stroke-linejoin="round"/></svg>
<svg style="left:1867px;top:898px" width="16" height="16" viewBox="1867 898 16 16" fill="none" stroke="#fff" stroke-width="1.5" stroke-linecap="round"><path d="M1868.2 898.9L1881.2 911.9M1881.2 898.9L1868.2 911.9"/></svg>
<svg style="left:276px;top:374px" width="40" height="42" viewBox="276 374 40 42" ><defs><filter id="cs" x="-30%" y="-30%" width="170%" height="170%"><feDropShadow dx="1" dy="2" stdDeviation="1.4" flood-color="#000" flood-opacity=".25"/></filter></defs><path filter="url(#cs)" d="M282.8 381.5C282 378.8 285.5 377.2 287.2 380L291.4 389.6C291.6 386.2 292.5 384.9 294.5 384.4C296.4 384 297 386 297.2 389.2C297.3 385.4 298.3 384 300 383.6C302 383.2 302.5 385.4 302.7 388.2C302.9 385.4 303.8 384.3 305.2 384.1C307.3 383.9 308.2 385.6 308.5 388C309.2 392.5 309 396.5 307.6 401.2C307.4 402.8 308 404.2 308.8 405.6L303.4 404.6L301.5 407.5L294.7 409.4C291.5 405.6 288.2 403.4 284.6 400C282.3 398 280.6 396.4 280.7 394.4C281.1 392.2 283.6 392 285.4 393.4L288.3 395.4Z" fill="#fff" stroke="#0f172a" stroke-width="1.4" stroke-linejoin="round"/><path d="M294 395.6L295.6 402.2M298.2 394.3L300 401.2M302.1 393.6L303.9 400.2" stroke="#0f172a" stroke-width="1.3" stroke-linecap="round" fill="none"/></svg>
</body></html>
